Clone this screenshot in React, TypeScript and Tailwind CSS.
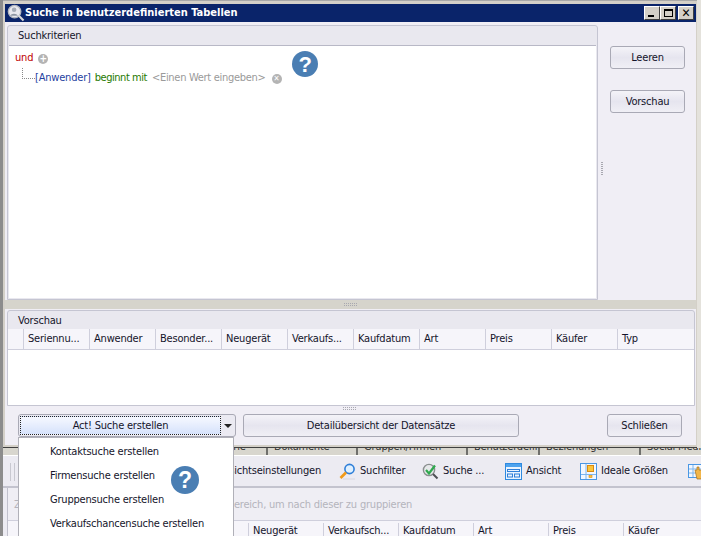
import React from 'react'

const FONT = "font-['DejaVu_Sans_Condensed','DejaVu_Sans',sans-serif]"

const PREVIEW_COLUMNS = ['Seriennu...', 'Anwender', 'Besonder...', 'Neugerät', 'Verkaufs...', 'Kaufdatum', 'Art', 'Preis', 'Käufer', 'Typ']
const BACK_COLUMNS = ['Neugerät', 'Verkaufsch...', 'Kaufdatum', 'Art', 'Preis', 'Käufer']
const MENU_ITEMS = ['Kontaktsuche erstellen', 'Firmensuche erstellen', 'Gruppensuche erstellen', 'Verkaufschancensuche erstellen']
const BACK_TABS = [
  { label: 'Historie', width: 'w-[65px]' },
  { label: 'Dokumente', width: 'w-[90px]' },
  { label: 'Gruppen/Firmen', width: 'w-[110px]' },
  { label: 'Benutzerdefiniert', width: 'w-[72px]' },
  { label: 'Beziehungen', width: 'w-[101px]' },
]

function HelpBadge({ className }: { className: string }) {
  return (
    <div className={`absolute flex items-center justify-center rounded-full bg-[#4a7eb3] text-white font-bold font-['Liberation_Sans',sans-serif] ${className}`}>
      ?
    </div>
  )
}

function WinButton({ children }: { children: React.ReactNode }) {
  return (
    <div className="w-[16px] h-[14px] bg-[#d4d0c8] border border-t-white border-l-white border-r-[#404040] border-b-[#404040] flex items-center justify-center">
      {children}
    </div>
  )
}

function AppButton({ label, className }: { label: string; className: string }) {
  return (
    <button className={`h-[23px] pt-[2px] rounded-[3px] border border-[#a9a9b5] bg-gradient-to-b from-[#f4f3f8] via-[#e6e5ef] to-[#f0eff5] text-[11px] text-[#14142a] ${className}`}>
      {label}
    </button>
  )
}

function Grips({ vertical }: { vertical?: boolean }) {
  return <div className={vertical ? 'w-[2px] h-[13px] border-x border-dotted border-[#a8a8b0]' : 'w-[13px] h-[3px] border-y border-dotted border-[#a8a8b0]'} />
}

function TitleIcon() {
  return (
    <svg width="18" height="18" viewBox="0 0 19 18" className="shrink-0">
      <circle cx="8" cy="7.5" r="6.6" fill="#e8e8ee" stroke="#b4b8c0" strokeWidth="1.4" />
      <circle cx="7.5" cy="5.5" r="2.4" fill="#a4abb6" />
      <path d="M3.5 12c.6-3 7-3 8 0z" fill="#8d95a2" />
      <path d="M12.5 12l5 5" stroke="#d8d8d8" strokeWidth="2.2" />
    </svg>
  )
}

function FilterIcon() {
  return (
    <svg width="17" height="17" viewBox="0 0 17 17" className="shrink-0">
      <circle cx="10.5" cy="6" r="4.6" fill="#dff0ff" stroke="#2f7fd8" strokeWidth="1.6" />
      <path d="M7 9.5L1.5 15" stroke="#f09a1a" strokeWidth="2.6" />
      <path d="M4 16h12" stroke="#d8d8e0" />
    </svg>
  )
}

function CheckSearchIcon() {
  return (
    <svg width="17" height="17" viewBox="0 0 17 17" className="shrink-0">
      <circle cx="7" cy="7" r="5.6" fill="#e6e8ea" stroke="#8a8f8f" strokeWidth="1.4" />
      <path d="M11 11l4.5 4.5" stroke="#4d5054" strokeWidth="2" />
      <path d="M4 7l3 3.5L13 2.5" fill="none" stroke="#2fa84f" strokeWidth="2.2" />
    </svg>
  )
}

function ViewIcon() {
  return (
    <svg width="17" height="17" viewBox="0 0 17 17" className="shrink-0">
      <rect x=".5" y=".5" width="16" height="16" fill="#eaf4ff" stroke="#2f8ae0" />
      <rect x="1" y="1" width="15" height="3" fill="#4ea3ee" />
      <rect x="2.5" y="6.5" width="12" height="2" fill="none" stroke="#2f7fd8" />
      <rect x="2.5" y="11" width="5" height="3" fill="none" stroke="#2f7fd8" />
      <rect x="9.5" y="11" width="5" height="3" fill="none" stroke="#2f7fd8" />
    </svg>
  )
}

function SizeIcon() {
  return (
    <svg width="17" height="17" viewBox="0 0 17 17" className="shrink-0">
      <rect x=".5" y=".5" width="16" height="16" fill="#f2f7ff" stroke="#4a97e4" />
      <path d="M6 1v15M1 11.5h15" stroke="#7db5ee" />
      <rect x="7.5" y="2.5" width="6" height="6" fill="#fbc53c" stroke="#d98a10" />
      <rect x="9" y="12.5" width="3" height="2" fill="#fbc53c" stroke="#d98a10" strokeWidth=".6" />
    </svg>
  )
}

function GridHandIcon() {
  return (
    <svg width="17" height="17" viewBox="0 0 17 17" className="shrink-0">
      <rect x=".5" y="1.5" width="15" height="13" fill="#f2f7ff" stroke="#4a97e4" />
      <path d="M5 2v12M1 6h14M1 10h14" stroke="#7db5ee" />
      <path d="M7 7h2V4h2v3h4v6l-2 3H9z" fill="#f2b64a" stroke="#a8701a" strokeWidth=".7" />
    </svg>
  )
}

function ToolItem({ icon, label, className }: { icon: React.ReactNode; label: string; className: string }) {
  return (
    <div className={`flex items-center gap-[4px] shrink-0 ${className}`}>
      {icon}
      <span className="whitespace-nowrap">{label}</span>
    </div>
  )
}

export default function App() {
  return (
    <div className={`relative w-[701px] h-[536px] overflow-hidden flex flex-col bg-[#ecebf2] text-[11px] tracking-[-0.2px] text-[#14142a] ${FONT}`}>
      {/* Dialog */}
      <div className="h-[448px] shrink-0 flex bg-[#e4e2dc]">
        <div className="w-[3px] shrink-0 bg-[#8c8c8c]" />
        <div className="flex-1 flex flex-col pt-[4px] pl-[2px] pr-[1px] pb-[2px] bg-[#d4d0c8] border-t border-[#a8a8a8] border-b border-b-[#404040]">
          <div className="h-[18px] shrink-0 -mt-px bg-[#0a246a] flex items-center pl-[2px] pr-[2px]">
            <TitleIcon />
            <span className="text-white font-bold text-[11px] tracking-normal whitespace-nowrap">Suche in benutzerdefinierten Tabellen</span>
            <div className="ml-auto flex items-center">
              <WinButton><div className="w-[6px] h-[2px] mt-[6px] -ml-[2px] bg-black" /></WinButton>
              <WinButton><div className="w-[9px] h-[8px] border border-t-2 border-black" /></WinButton>
              <div className="ml-[2px]">
                <WinButton><span className="text-[12px] leading-none font-bold text-black">✕</span></WinButton>
              </div>
            </div>
          </div>

          <div className="flex-1 flex flex-col bg-[#f0eef5]">
            {/* Upper area */}
            <div className="h-[278px] shrink-0 flex pt-[3px] pl-[2px]">
              <div className="w-[591px] shrink-0 flex flex-col rounded-t-[3px] border border-[#c5c5d2] bg-[#e9e8ef]">
                <div className="h-[19px] shrink-0 flex items-center pl-[10px] pt-[2px]">Suchkriterien</div>
                <div className="flex-1 mx-px mb-px border-t border-[#b8b8c6] bg-white pl-[6px] pt-[4px]">
                  <div className="flex items-center h-[17px]">
                    <span className="text-[#c00000]">und</span>
                    <span className="ml-[5px] w-[10px] h-[10px] rounded-full bg-[#b4b4b4] text-white text-[10px] leading-[10px] font-bold text-center">+</span>
                  </div>
                  <div className="flex items-center h-[21px] pt-[2px]">
                    <div className="w-[13px] h-[11px] ml-[7px] mb-[10px] border-l border-b border-dotted border-[#888]" />
                    <span className="text-[#1f3f9f]">[Anwender]</span>
                    <span className="ml-[4px] tracking-[-0.45px] text-[#1f7a00]">beginnt mit</span>
                    <span className="ml-[5px] tracking-[-0.3px] text-[#9a9a9a]">&lt;Einen Wert eingeben&gt;</span>
                    <span className="ml-[6px] w-[10px] h-[10px] rounded-full bg-[#b4b4b4] text-white text-[8px] leading-[10px] font-bold text-center">✕</span>
                  </div>
                </div>
              </div>
              <div className="flex-1 flex">
                <div className="w-[7px] shrink-0 flex items-center justify-center pt-[12px]"><Grips vertical /></div>
                <div className="flex flex-col gap-[21px] pl-[5px] pt-[21px]">
                  <AppButton label="Leeren" className="w-[75px]" />
                  <AppButton label="Vorschau" className="w-[75px]" />
                </div>
              </div>
            </div>

            {/* Splitter */}
            <div className="h-[10px] shrink-0 flex items-center justify-center bg-[#d6d4cc] border-b border-[#f0eef5]"><Grips /></div>

            {/* Preview */}
            <div className="h-[96px] shrink-0 ml-[2px] mr-[1px] flex flex-col rounded-t-[3px] border border-[#c5c5d2] bg-[#e9e8ef]">
              <div className="h-[18px] shrink-0 flex items-center pl-[10px] pt-[2px]">Vorschau</div>
              <div className="flex-1 flex flex-col bg-white">
                <div className="h-[21px] shrink-0 flex border-b border-[#cfcfdc] bg-[#f6f5fa]">
                  <div className="w-[16px] shrink-0 border-r border-[#cfcfdc]" />
                  {PREVIEW_COLUMNS.map(col => (
                    <div key={col} className="w-[66px] shrink-0 pl-[4px] border-r border-[#cfcfdc] flex items-center whitespace-nowrap last:border-r-0">{col}</div>
                  ))}
                </div>
              </div>
            </div>

            {/* Bottom row */}
            <div className="relative flex-1 flex items-start pt-[8px] pl-[13px]">
              <div className="absolute top-px left-[338px]"><Grips /></div>
              <div className="w-[218px] h-[23px] shrink-0 flex items-center rounded-[3px] border border-[#a9a9b5] p-[1px] bg-[#ebeaf2]">
                <div className="w-[201px] h-[19px] pt-[2px] border border-dotted border-[#222] bg-gradient-to-b from-[#f6f8ff] to-[#d6e2fb] flex items-center justify-center">Act! Suche erstellen</div>
                <div className="flex-1 flex justify-center">
                  <svg width="8" height="4" viewBox="0 0 8 4"><path d="M0 0h8L4 4z" fill="#222" /></svg>
                </div>
              </div>
              <AppButton label="Detailübersicht der Datensätze" className="w-[276px] ml-[7px] shrink-0" />
              <AppButton label="Schließen" className="w-[75px] ml-[88px] shrink-0" />
            </div>
          </div>
        </div>
        <div className="w-[4px] shrink-0" />
      </div>

      {/* Main window behind the dialog */}
      <div className="flex-1 flex">
        <div className="w-[3px] shrink-0 bg-[#8c8c8c]" />
        <div className="flex-1 min-w-0 flex flex-col">
          <div className="h-[8px] shrink-0 overflow-hidden flex pl-[200px] bg-[#d8d6ce] border-b border-white text-[#333] leading-[13px]">
            {BACK_TABS.map(tab => (
              <div key={tab.label} className={`${tab.width} shrink-0 h-[7px] overflow-hidden border-r-2 border-[#70706c] pl-[6px]`}>
                <div className="-mt-[8px] whitespace-nowrap">{tab.label}</div>
              </div>
            ))}
            <div className="h-[7px] overflow-hidden pl-[6px]">
              <div className="-mt-[8px] whitespace-nowrap">Social Media Updates</div>
            </div>
          </div>
          <div className="h-[32px] shrink-0 flex items-center pt-px border-b-2 border-[#c3c3ce] overflow-hidden pl-[7px]">
            <div className="w-[5px] h-[18px] shrink-0 border-x border-[#c8c8d0]" />
            <span className="whitespace-nowrap ml-[210px] mr-[18px] w-[96px] flex justify-end">Ansichtseinstellungen</span>
            <ToolItem icon={<FilterIcon />} label="Suchfilter" className="w-[83px]" />
            <ToolItem icon={<CheckSearchIcon />} label="Suche ..." className="w-[83px]" />
            <ToolItem icon={<ViewIcon />} label="Ansicht" className="w-[75px]" />
            <ToolItem icon={<SizeIcon />} label="Ideale Größen" className="w-[108px]" />
            <GridHandIcon />
          </div>
          <div className="flex-1 flex flex-col ml-[4px] border-l border-[#c0c0cc]">
            <div className="h-[32px] shrink-0 flex items-center pt-[3px] pl-[6px] text-[#b4b4bc] whitespace-nowrap bg-[#efeef4]">
              Ziehen Sie eine Spaltenüberschrift in diesen Bereich, um nach dieser zu gruppieren
            </div>
            <div className="flex-1 flex pl-[240px] pt-[2px] bg-[#f6f5fa] border-t border-[#cfcfdc]">
              {BACK_COLUMNS.map(col => (
                <div key={col} className="w-[75px] shrink-0 pl-[4px] border-l border-[#cfcfdc] flex items-center whitespace-nowrap">{col}</div>
              ))}
            </div>
          </div>
        </div>
      </div>

      {/* Open menu */}
      <div className="absolute left-[18px] top-[437px] w-[216px] h-[110px] bg-white border border-[#b0b0b8] pt-[2px] pl-[31px]">
        {MENU_ITEMS.map(item => (
          <div key={item} className="h-[24px] flex items-center whitespace-nowrap">{item}</div>
        ))}
      </div>

      <HelpBadge className="left-[292px] top-[51px] w-[26px] h-[26px] text-[22px]" />
      <HelpBadge className="left-[171px] top-[466px] w-[28px] h-[28px] text-[23px]" />
    </div>
  )
}
